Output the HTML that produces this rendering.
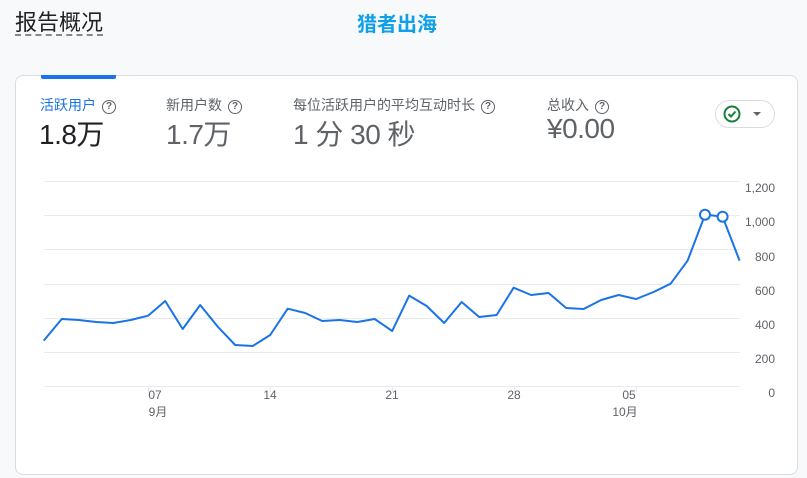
<!DOCTYPE html>
<html><head><meta charset="utf-8"><style>
body{margin:0;width:807px;height:478px;background:#f8f9fa;position:relative;overflow:hidden;font-family:"Liberation Sans","Noto Sans CJK SC",sans-serif;}
.a{position:absolute;white-space:nowrap}
.q{display:inline-block;width:12px;height:12px;border:1.5px solid #5f6368;border-radius:50%;font-size:10px;line-height:12px;text-align:center;color:#5f6368;font-weight:bold;vertical-align:1px;margin-left:6px}
.lab{font-size:14px;color:#5f6368;top:95px}
.val{font-size:28px;color:#5f6368;top:113px;letter-spacing:-0.5px}
.yl{font-size:12px;color:#5f6368;right:32px;text-align:right}
.xl{font-size:12px;color:#5f6368;text-align:center;width:30px}
</style></head><body>
<div class="a" style="left:15px;top:5px;font-size:22px;color:#202124">报告概况</div>
<div class="a" style="left:15px;top:34px;width:88px;border-top:2px dashed #888"></div>
<div class="a" style="left:357px;top:8px;font-size:20px;font-weight:bold;color:#10a0e8">猎者出海</div>
<div class="a" style="left:15px;top:75px;width:781px;height:398px;background:#fff;border:1px solid #dadce0;border-radius:8px"></div>
<div class="a" style="left:41px;top:75px;width:75px;height:4px;background:#1a73e8;border-radius:0 0 2px 2px"></div>
<div class="a lab" style="left:40px;color:#1a73e8">活跃用户<span class="q">?</span></div>
<div class="a lab" style="left:166px">新用户数<span class="q">?</span></div>
<div class="a lab" style="left:293px">每位活跃用户的平均互动时长<span class="q">?</span></div>
<div class="a lab" style="left:547px">总收入<span class="q">?</span></div>
<div class="a val" style="left:39px;color:#202124">1.8万</div>
<div class="a val" style="left:166px">1.7万</div>
<div class="a val" style="left:293px">1 分 30 秒</div>
<div class="a val" style="left:547px">¥0.00</div>
<div class="a" style="left:715px;top:100px;width:58px;height:26px;border:1px solid #dadce0;border-radius:14px;background:#fff"></div>
<svg class="a" style="left:722px;top:104px" width="50" height="20"><circle cx="10" cy="10" r="7.5" fill="none" stroke="#188038" stroke-width="2"/><path d="M6.5 10l2.5 2.5 4.5-5" fill="none" stroke="#188038" stroke-width="2"/><path d="M31 8h8l-4 4z" fill="#5f6368"/></svg>
<svg class="a" style="left:0;top:0" width="807" height="478">
<g stroke="#e8eaed" stroke-width="1">
<line x1="44" y1="181.5" x2="740" y2="181.5"/><line x1="44" y1="215.5" x2="740" y2="215.5"/><line x1="44" y1="249.5" x2="740" y2="249.5"/><line x1="44" y1="284.5" x2="740" y2="284.5"/><line x1="44" y1="318.5" x2="740" y2="318.5"/><line x1="44" y1="352.5" x2="740" y2="352.5"/><line x1="44" y1="386.5" x2="740" y2="386.5"/>
<line x1="148.5" y1="386" x2="148.5" y2="392"/><line x1="270.5" y1="386" x2="270.5" y2="392"/><line x1="392.5" y1="386" x2="392.5" y2="392"/><line x1="514.5" y1="386" x2="514.5" y2="392"/><line x1="636.5" y1="386" x2="636.5" y2="392"/>
</g>
</svg>
<svg class="a" style="left:0;top:170px" width="807" height="308" viewBox="0 0 1568 924" preserveAspectRatio="none">
<polyline fill="none" stroke="#1a73e8" stroke-width="2" vector-effect="non-scaling-stroke" stroke-linejoin="round" points="85,512 120,447 153,450 187,456 220,459 254,450 288,437 321,393 355,477 389,405 423,470 457,525 491,528 525,495 559,416 593,429 626,453 660,450 694,456 728,447 762,483 795,377 829,408 863,459 897,396 931,441 965,435 998,353 1032,375 1066,369 1100,414 1134,417 1168,390 1202,375 1236,387 1270,366 1303,341 1336,272 1370,134 1404,140 1437,272"/>
</svg>
<svg class="a" style="left:0;top:0" width="807" height="478"><circle cx="705" cy="214.7" r="5" fill="#fff" stroke="#1a73e8" stroke-width="2"/><circle cx="722.6" cy="216.7" r="5" fill="#fff" stroke="#1a73e8" stroke-width="2"/></svg>
<div class="a yl" style="top:181px">1,200</div>
<div class="a yl" style="top:215px">1,000</div>
<div class="a yl" style="top:250px">800</div>
<div class="a yl" style="top:284px">600</div>
<div class="a yl" style="top:318px">400</div>
<div class="a yl" style="top:352px">200</div>
<div class="a yl" style="top:386px">0</div>
<div class="a xl" style="left:140px;top:388px">07</div>
<div class="a xl" style="left:143px;top:403px">9月</div>
<div class="a xl" style="left:255px;top:388px">14</div>
<div class="a xl" style="left:377px;top:388px">21</div>
<div class="a xl" style="left:499px;top:388px">28</div>
<div class="a xl" style="left:614px;top:388px">05</div>
<div class="a xl" style="left:610px;top:403px">10月</div>
</body></html>
